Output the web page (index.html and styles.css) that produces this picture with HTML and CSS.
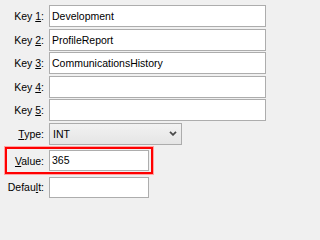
FILE: index.html
```html
<!DOCTYPE html>
<html>
<head>
<meta charset="utf-8">
<link rel="stylesheet" href="styles.css">
</head>
<body>
<div class="form">
  <div class="row"><span class="lbl">Key <u>1</u>:</span><div class="field wide">Development</div></div>
  <div class="row"><span class="lbl">Key <u>2</u>:</span><div class="field wide">ProfileReport</div></div>
  <div class="row"><span class="lbl">Key <u>3</u>:</span><div class="field wide">CommunicationsHistory</div></div>
  <div class="row"><span class="lbl">Key <u>4</u>:</span><div class="field wide"></div></div>
  <div class="row"><span class="lbl">Key <u>5</u>:</span><div class="field wide"></div></div>
  <div class="row"><span class="lbl"><u>T</u>ype:</span><div class="select"><span>INT</span><svg class="chev" width="8" height="5" viewBox="0 0 8 5"><polyline points="1,0.8 4,3.8 7,0.8" fill="none" stroke="#4a4a4a" stroke-width="1.8"/></svg></div></div>
  <div class="row hl"><span class="lbl"><u>V</u>alue:</span><div class="field short">365</div></div>
  <div class="row last"><span class="lbl">Defau<u>l</u>t:</span><div class="field short"></div></div>
</div>
</body>
</html>
```
FILE: styles.css
```css
body {
  margin: 0;
  background: #f0f0f0;
  font: 10.5px "Liberation Sans", Arial, sans-serif;
  color: #000;
}
.form {
  display: flex;
  flex-direction: column;
  align-items: flex-start;
  padding-top: 5px;
  gap: 1.5px;
}
.row {
  display: flex;
  align-items: center;
  gap: 5px;
  height: 22px;
}
.lbl {
  width: 44px;
  text-align: right;
  white-space: nowrap;
}
u {
  text-underline-offset: 1px;
}
.field {
  box-sizing: border-box;
  height: 22px;
  border: 1px solid #adadad;
  background: #fff;
  padding-left: 2px;
  line-height: 20px;
  white-space: nowrap;
  overflow: hidden;
}
.wide {
  width: 217px;
}
.short {
  width: 100px;
}
.select {
  box-sizing: border-box;
  width: 133px;
  height: 22px;
  border: 1px solid #acacac;
  background: linear-gradient(#f2f2f2, #e5e5e5);
  display: flex;
  align-items: center;
  justify-content: space-between;
  padding: 0 4px 0 3px;
}
.chev {
  display: block;
}
.row.hl {
  height: auto;
  margin: 1px 0 0 5px;
  border: 2px solid #ff0000;
  box-shadow: 0 0 0 1px #ffa4a4;
  padding: 1px 2px 1px 0;
}
.row.hl .lbl {
  width: 37px;
}
.row.hl .field,
.row.last .field {
  height: 21px;
  line-height: 19px;
}
.row.last {
  margin-top: 0.5px;
}
```
